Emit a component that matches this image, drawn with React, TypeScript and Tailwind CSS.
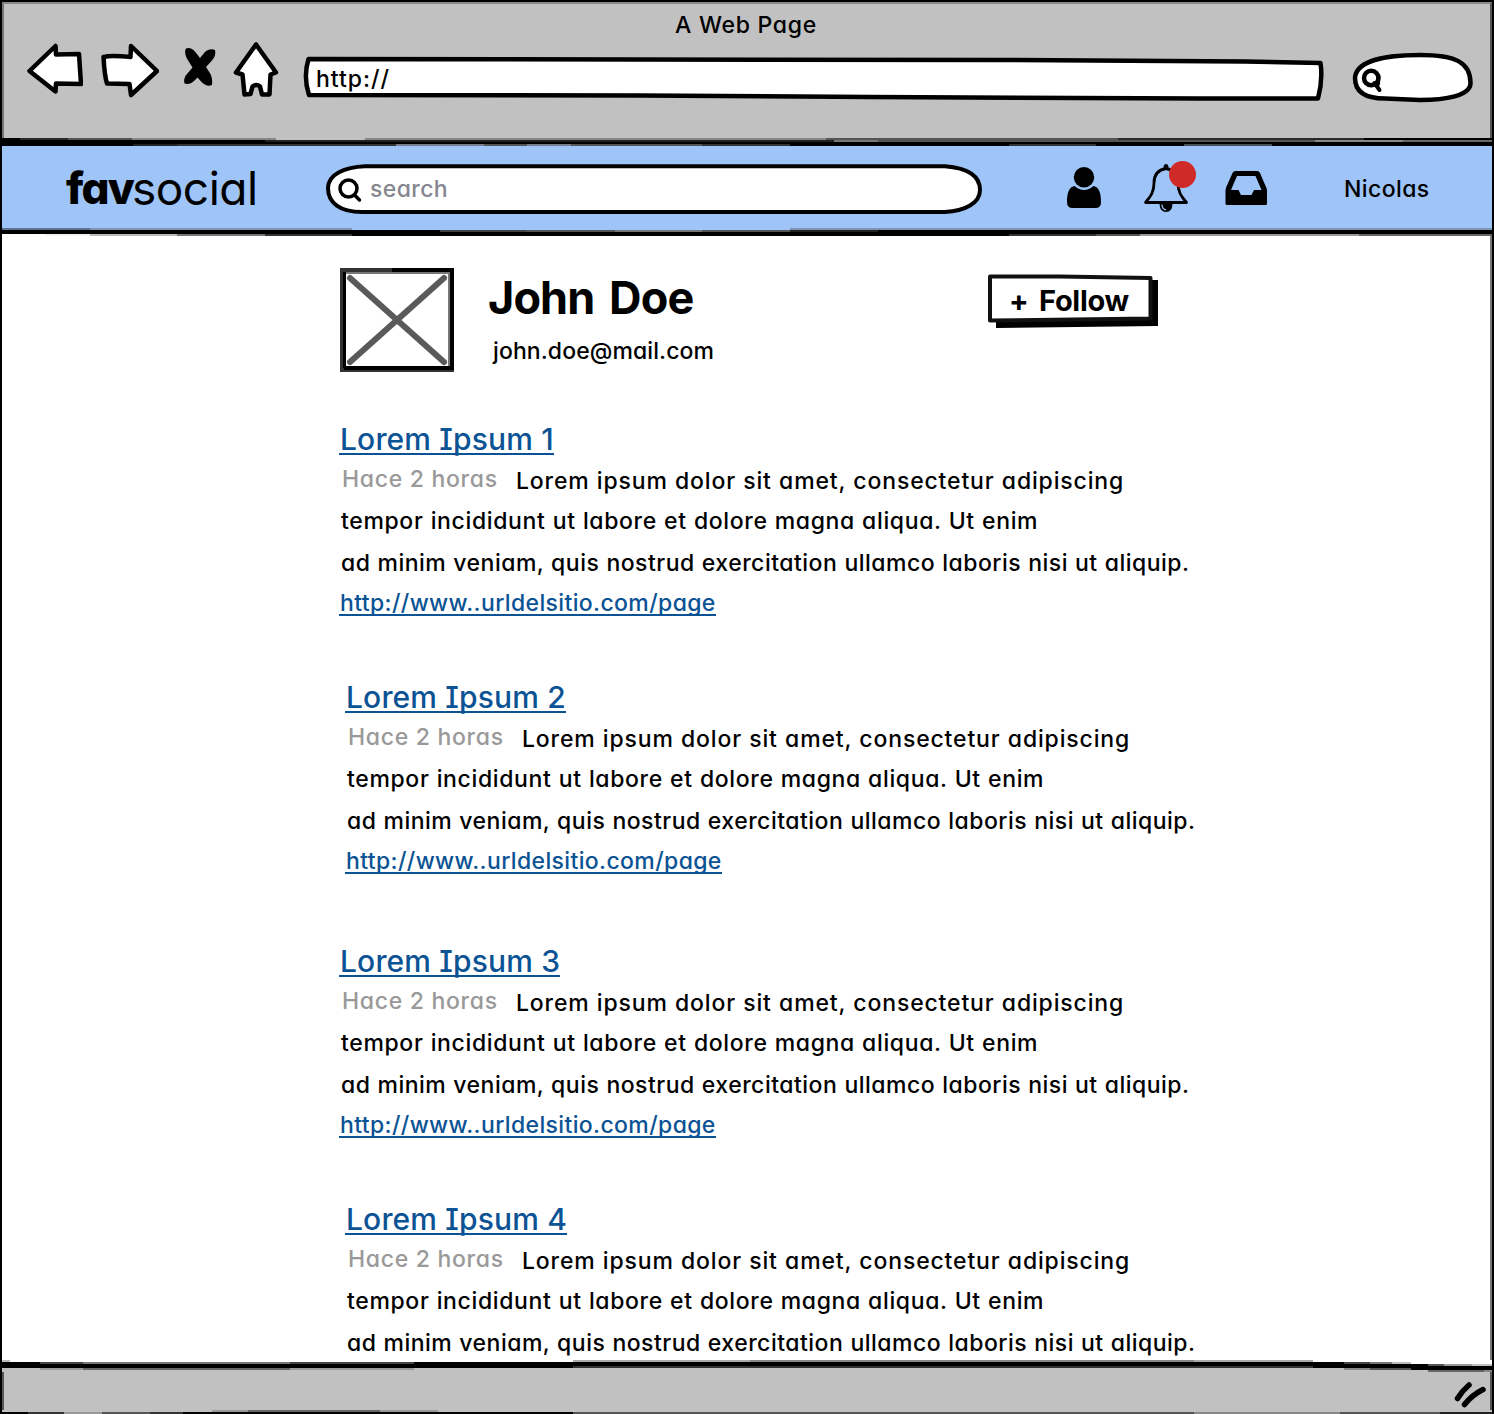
type Segment = [x: number, end: number, color: string];

const CHROME_RULE: Segment[][] = [
  [[2, 20, "#000"], [20, 68, "#2a2a2a"], [68, 132, "#555"], [132, 276, "#868686"], [276, 365, "#c1c1c1"], [365, 826, "#868686"], [826, 1118, "#555"], [1118, 1364, "#2a2a2a"], [1364, 1492, "#000"]],
  [[2, 265, "#000"], [265, 834, "#222"], [834, 878, "#777"], [878, 1315, "#555"], [1315, 1403, "#888"], [1403, 1492, "#666"]],
  [[2, 1492, "#000"]],
  [[2, 133, "#000"], [133, 177, "#222"], [177, 396, "#333"], [396, 484, "#777f8c"], [484, 527, "#555"], [527, 571, "#777f8c"], [571, 702, "#555"], [702, 790, "#333"], [790, 1009, "#000"], [1009, 1096, "#333"], [1096, 1184, "#000"], [1184, 1272, "#4a5058"], [1272, 1492, "#000"]],
];

const NAV_RULE: Segment[][] = [
  [[2, 90, "#5d7391"], [90, 352, "#7d94b4"], [352, 790, "#9ec4f8"], [790, 1492, "#7d94b4"]],
  [[2, 440, "#000"], [440, 527, "#444"], [527, 615, "#555"], [615, 702, "#777"], [702, 790, "#555"], [790, 878, "#222"], [878, 1492, "#000"]],
  [[2, 1492, "#000"]],
  [[45, 90, "#f2f2f2"], [90, 177, "#bbb"], [177, 265, "#777"], [265, 352, "#333"], [352, 1009, "#000"], [1009, 1096, "#333"], [1096, 1140, "#555"], [1140, 1359, "#999"], [1359, 1492, "#666"]],
];

const FOOTER_RULE: Segment[][] = [
  [[2, 10, "#bbb"], [573, 750, "#aaa"], [750, 1194, "#888"], [1194, 1313, "#aaa"]],
  [[2, 40, "#000"], [40, 83, "#444"], [83, 290, "#777"], [290, 414, "#444"], [414, 1344, "#000"], [1344, 1370, "#444"], [1370, 1392, "#777"], [1392, 1411, "#bbb"]],
  [[2, 1428, "#000"], [1428, 1444, "#555"], [1444, 1472, "#999"]],
  [[2, 573, "#000"], [573, 1313, "#333"], [1313, 1492, "#000"]],
  [[40, 83, "#999"], [83, 290, "#666"], [290, 414, "#999"], [1344, 1370, "#888"], [1370, 1411, "#555"], [1411, 1492, "#000"]],
  [[1428, 1484, "#666"], [1484, 1492, "#888"]],
];

const BOTTOM_RULE: Segment[][] = [
  [[212, 248, "#999"], [248, 380, "#666"], [380, 438, "#999"]],
  [[2, 28, "#000"], [28, 64, "#333"], [64, 102, "#999"], [102, 150, "#555"], [150, 183, "#333"], [183, 573, "#000"], [573, 1194, "#555"], [1194, 1340, "#888"], [1340, 1440, "#555"], [1440, 1492, "#222"]],
];

/* Uneven hand-inked line, built from 2px rows of shaded runs. */
function SketchRule({ rows }: { rows: Segment[][] }) {
  const h = rows.length * 2;
  return (
    <svg width="1490" height={h} viewBox={`2 0 1490 ${h}`} shapeRendering="crispEdges" className="block shrink-0">
      {rows.map((row, y) =>
        row.map(([a, b, color]) => <rect key={`${y}-${a}`} x={a} y={y * 2} width={b - a} height={2} fill={color} />),
      )}
    </svg>
  );
}

function BackIcon() {
  return (
    <svg width="56" height="52" viewBox="27 43 56 52" fill="#fff" stroke="#000" strokeWidth="4.500" strokeLinejoin="round" className="block">
      <path d="M29.5 71 55.5 46 56 54.5 79 54 81 84 56 83.500 55.500 91.500Z" />
    </svg>
  );
}

function ForwardIcon() {
  return (
    <svg width="58" height="55" viewBox="101 43 58 55" fill="#fff" stroke="#000" strokeWidth="4.500" strokeLinejoin="round" className="block">
      <path d="M103.500 57 C110 55 121 56 130.500 57 L131 46 157 71 131 95 129.500 84 107 83.500 C104.500 76 104 66 103.500 57Z" />
    </svg>
  );
}

function StopIcon() {
  return (
    <svg width="34" height="40" viewBox="183 47 34 40" className="block">
      <path d="M185.500 49 C188 47 192 48.500 194.500 51 L200 58 L205 52 C208 49 212 48.500 215 50 C216 54 214.500 58 211.500 61 L206 67 L210.500 74 C212 77.500 212.500 81 212 85 C208.500 86.500 205 85.500 202 82.500 L197.500 77.500 L194 81 C191.500 83.500 188 84.500 184.500 83.500 C183.500 80 184.500 76.500 187 74 L192.500 67.500 L187.500 59.500 C185.500 56 184.500 52.500 185.500 49Z" />
    </svg>
  );
}

function HomeIcon() {
  return (
    <svg width="46" height="56" viewBox="233 42 46 56" fill="#fff" stroke="#000" strokeWidth="4.500" strokeLinejoin="round" className="block">
      <path d="M256 44.500 236 72.500 242.500 74.500 244.500 94.500 250.500 94 252.500 86.500 Q256.500 83.500 260 86.500 L262 94.500 269.500 94.500 270.500 74.500 276 72.500Z" />
    </svg>
  );
}

function PersonIcon() {
  return (
    <svg width="34" height="42" viewBox="1067 167 34 42" className="block">
      <ellipse cx="1084" cy="177.300" rx="10.200" ry="10.300" />
      <path d="M1074.500 186 Q1084 194 1093.500 186 C1099.500 187 1101 194 1101 202 Q1101 208 1095.500 208 H1072.500 Q1067 208 1067 202 C1067 194 1068.500 187 1074.500 186Z" />
    </svg>
  );
}

function BellIcon() {
  return (
    <svg width="46" height="50" viewBox="1143 163 46 50" className="block">
      <path d="M1166 168.500 C1157 170 1154 176 1154 183 C1154 193 1150 197 1145.500 202.500 H1186.500 C1182 197 1178 193 1178 183 C1178 176 1175 170 1166 168.500Z" fill="none" stroke="#000" strokeWidth="2.800" strokeLinejoin="round" />
      <path d="M1163.500 168 Q1163.500 164 1166 164 Q1168.500 164 1168.500 168Z" />
      <path d="M1159.500 204 H1172.500 Q1172 212 1166 212 Q1160 212 1159.500 204Z" />
      <path d="M1162 204.500 Q1162 209 1166 209.800" fill="none" stroke="#9ec4f8" strokeWidth="1.200" />
    </svg>
  );
}

function InboxIcon() {
  return (
    <svg width="42" height="35" viewBox="1225 171 42 35" className="block">
      <path fillRule="evenodd" d="M1235.500 171 H1257 Q1259 171 1260 173 L1266 187 Q1267 189 1267 191 V203.500 Q1267 205 1265.500 205 H1227 Q1225.500 205 1225.500 203.500 V191 Q1225.500 189 1226.300 187 L1232.500 173 Q1233.500 171 1235.500 171Z M1237 176 L1231 190 H1238.500 L1241 195 H1251.500 L1254 190 H1261.500 L1255.500 176Z" />
    </svg>
  );
}

function BrowserChrome() {
  return (
    <header className="flex h-[136px] shrink-0 flex-col border-x-2 border-t-2 border-t-[#888] border-l-[#777] border-r-[#555] bg-[#c1c1c1]">
      <h1 className="h-[38px] shrink-0 pr-[2px] text-center text-[23px] leading-[42px]">
        <span className="tracking-[0.7px]">A Web Page</span>
      </h1>
      <div className="flex items-start">
        <div className="ml-[23px] mt-px"><BackIcon /></div>
        <div className="ml-[18px] mt-px"><ForwardIcon /></div>
        <div className="ml-6 mt-[5px]"><StopIcon /></div>
        <div className="ml-4"><HomeIcon /></div>
        <div className="relative ml-6 mt-[14px] h-[46px] w-[1022px]">
          <svg width="1022" height="46" viewBox="303 56 1022 46" fill="#fff" stroke="#000" strokeWidth="4.500" strokeLinejoin="round" className="absolute inset-0">
            <path d="M308.500 59 L1000 60 L1245 61.500 L1320.500 63 Q1323 80 1318 98.500 L1200 98.500 L870 97 L640 95.500 L309 95 Q303 77 308.500 59Z" />
          </svg>
          <span className="relative ml-[13px] block text-[23px] leading-[46px] tracking-[1px]">http://</span>
        </div>
        <svg width="122" height="52" viewBox="1352 52 122 52" fill="#fff" stroke="#000" strokeWidth="4.500" className="ml-[27px] mt-[10px] block">
          <path d="M1355 78 C1356 61 1385 55 1420 55 C1455 55 1470.500 62 1470.500 83 C1470.500 96 1445 100 1420 100 L1385 98.500 C1365 98.500 1355 92 1355 78Z" />
          <circle cx="1371.200" cy="78" r="7.200" />
          <path d="M1378.500 76 L1378 84 M1374.500 83 L1379.500 90" strokeLinecap="round" strokeWidth="4" />
        </svg>
      </div>
    </header>
  );
}

function NavBar() {
  return (
    <nav className="flex h-[82px] shrink-0 items-start bg-[#9ec4f8]">
      <div className="ml-[64px] flex w-[260px] text-[46px] leading-[84px]">
        <span className="w-[66px] text-[44px] font-extrabold tracking-[-1.8px]">fav</span>
        <span className="font-normal tracking-[-0.5px]">social</span>
      </div>
      <div className="relative mt-[18px] flex h-[50px] w-[656px] items-center">
        <svg width="656" height="50" viewBox="326 164 656 50" fill="#fff" stroke="#000" strokeWidth="4" className="absolute inset-0">
          <path d="M365 166.200 H945 C968 168 980 176 980 190 C980 203 965 211 945 212 H362 C340 212 328 203 328 188 C328 174 345 167 365 166.200Z" />
          <g strokeLinecap="round" strokeWidth="3.500">
            <circle cx="348.500" cy="188.500" r="8.500" />
            <path d="M354.500 195 L359.500 200" />
          </g>
        </svg>
        <span className="relative ml-[44px] text-[23px] leading-none tracking-[0.4px] text-[#85868f]">search</span>
      </div>
      <div className="ml-[85px] mt-[21px]"><PersonIcon /></div>
      <div className="relative ml-[42px] mt-[17px]">
        <BellIcon />
        <span className="absolute -top-[2px] left-[25.500px] size-[27px] rounded-full bg-[#cf2a27]" />
      </div>
      <div className="ml-9 mt-[25px]"><InboxIcon /></div>
      <span className="ml-[77px] text-[23px] leading-[86px] tracking-[0.4px]">Nicolas</span>
    </nav>
  );
}

function Avatar() {
  return (
    <svg width="114" height="104" viewBox="340 268 114 104" className="block shrink-0">
      <path d="M340 268 H454 V372 H340Z" fill="#333" />
      <path d="M392 268 H454 V370 H344 V272 H392Z" />
      <path d="M344 272 H450 V368 H344Z" fill="#777" />
      <path d="M343 272 V368 H450 V366 H346 V272Z" />
      <path d="M346 274 H448 V366 H346Z" fill="#fff" />
      <path d="M350 278 L444 362 M444 278 L350 362" stroke="#5a5a5c" strokeWidth="6" strokeLinecap="round" />
    </svg>
  );
}

function FollowButton() {
  return (
    <button className="relative block h-[53px] w-[170px]">
      <svg width="170" height="54" viewBox="988 274 170 54" className="absolute inset-0">
        <path d="M996 280 H1158 V326 L996 328Z" />
        <path d="M990 276.500 L1060 276.500 L1150.500 278 V318.500 L990 320.500Z" fill="#fff" stroke="#111" strokeWidth="4" strokeLinejoin="round" />
      </svg>
      <span className="relative -left-[4px] block text-[29px] font-bold leading-[48px] tracking-[-0.3px] [word-spacing:4px]">+ Follow</span>
    </button>
  );
}

function Profile() {
  return (
    <section className="flex h-[182px] items-start pt-8">
      <Avatar />
      <div className="ml-[34px] w-[500px]">
        <h2 className="text-[45px] font-bold leading-[60px] tracking-[-0.9px] [word-spacing:5px]">John Doe</h2>
        <p className="ml-[5px] text-[23px] leading-[46px] tracking-[0.1px]">john.doe@mail.com</p>
      </div>
      <div className="mt-[6px]"><FollowButton /></div>
    </section>
  );
}

function Post({ n, link = true, className }: { n: number; link?: boolean; className: string }) {
  return (
    <article className={`h-[204px] whitespace-nowrap text-[23px] ${className}`}>
      <h3 className="h-10 text-[30px] leading-[42px] text-[#0b5394]">
        <a className="-ml-px inline-block h-[37px] border-b-2 border-[#0b5394] pl-px tracking-[0.15px] [font-feature-settings:'cv08','cv11']">Lorem Ipsum {n}</a>
      </h3>
      <div className="flex h-[42px]">
        <span className="ml-[2px] w-[174px] leading-[42px] tracking-[0.7px] text-[#999]">Hace 2 horas</span>
        <span className="leading-[46px] tracking-[0.85px] [word-spacing:0.3px]">Lorem ipsum dolor sit amet, consectetur adipiscing</span>
      </div>
      <p className="ml-px h-[42px] leading-[42px] tracking-[0.65px] [word-spacing:0.4px]">tempor incididunt ut labore et dolore magna aliqua. Ut enim</p>
      <p className="ml-px h-10 leading-[42px] tracking-[0.5px] [word-spacing:0.4px]">ad minim veniam, quis nostrud exercitation ullamco laboris nisi ut aliquip.</p>
      {link && (
        <a className="-ml-px inline-block h-[34px] border-b-2 border-[#0b5394] pl-px leading-[42px] tracking-[0.37px] text-[#0b5394]">http://www..urldelsitio.com/page</a>
      )}
    </article>
  );
}

export default function App() {
  return (
    <div className="flex h-[1414px] w-[1494px] flex-col overflow-hidden border-x-2 border-t-2 border-black bg-white font-['Inter',sans-serif] font-[450] text-black [font-feature-settings:'cv11']">
      <BrowserChrome />
      <SketchRule rows={CHROME_RULE} />
      <NavBar />
      <SketchRule rows={NAV_RULE} />
      <main className="h-[1124px] shrink-0 overflow-hidden border-r-2 border-[#777] pl-[338px]">
        <Profile />
        <Post n={1} className="" />
        <Post n={2} className="ml-[6px] mt-[54px]" />
        <Post n={3} className="mt-[60px]" />
        <Post n={4} link={false} className="ml-[6px] mt-[54px]" />
      </main>
      <footer className="flex min-h-0 flex-1 flex-col bg-[#c1c1c1]">
        <div className="bg-[linear-gradient(#fff_0_4px,#c1c1c1_4px)]"><SketchRule rows={FOOTER_RULE} /></div>
        <div className="flex flex-1 items-start justify-end border-x-2 border-[#555] pr-[3px] pt-[9px]">
          <svg width="34" height="28" viewBox="1453 1381 34 28" fill="none" stroke="#000" strokeWidth="5.500" strokeLinecap="round" className="block">
            <path d="M1457.500 1398.500 Q1462 1391 1469 1385 M1464.500 1404.500 Q1472 1395 1483 1389.500" />
          </svg>
        </div>
        <SketchRule rows={BOTTOM_RULE} />
      </footer>
    </div>
  );
}
